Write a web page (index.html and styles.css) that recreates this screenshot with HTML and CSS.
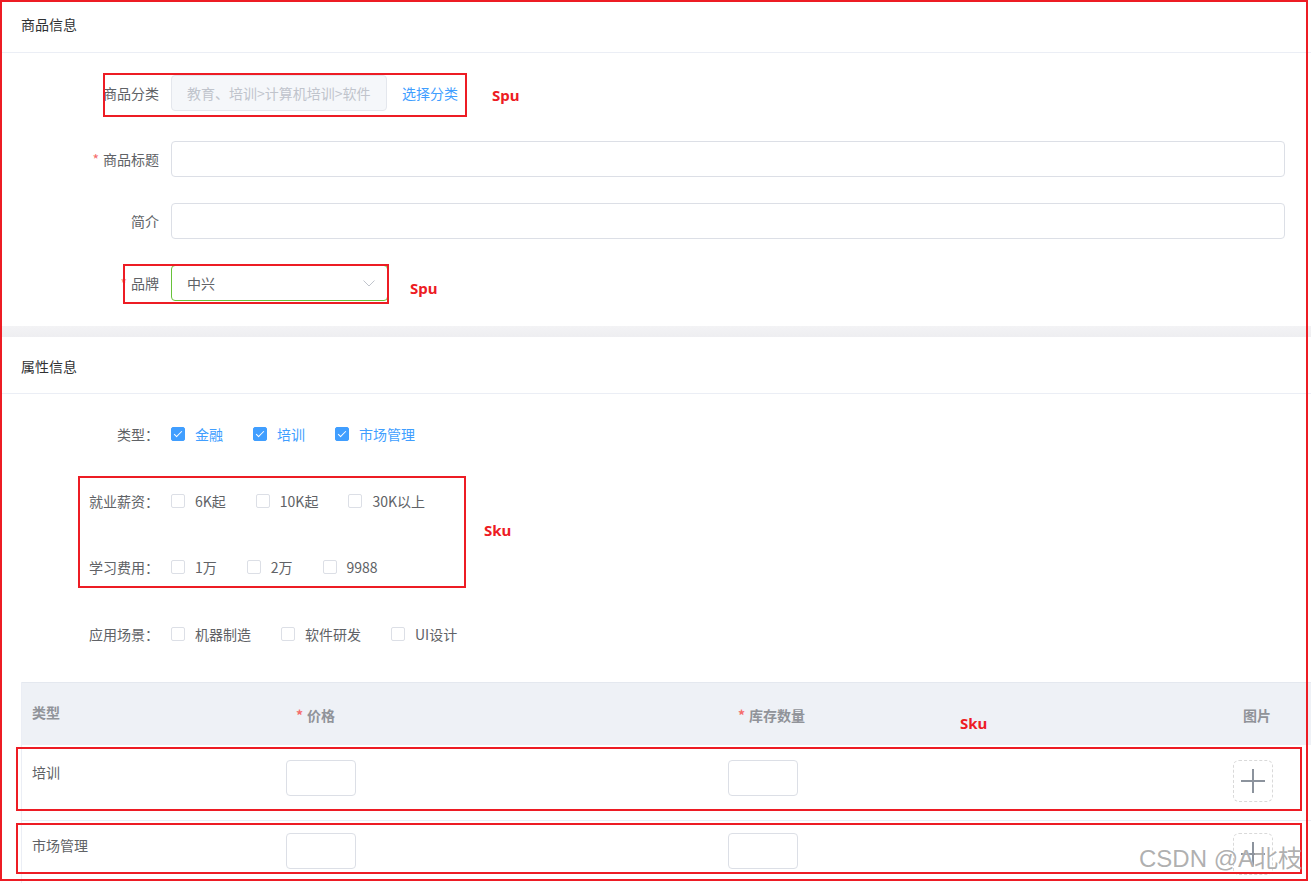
FILE: index.html
```html
<!DOCTYPE html>
<html lang="zh-CN">
<head>
<meta charset="utf-8">
<title>商品信息</title>
<link rel="stylesheet" href="styles.css">
</head>
<body>
<div class="page">
  <section class="card">
    <div class="card-header first">商品信息</div>
    <div class="card-body form">
      <div class="form-item item-1">
        <div class="form-label">商品分类</div>
        <div class="form-content">
          <div class="input disabled">教育、培训&gt;计算机培训&gt;软件</div>
          <a class="link">选择分类</a>
        </div>
      </div>
      <div class="form-item">
        <div class="form-label"><span class="req">*</span>商品标题</div>
        <div class="form-content grow"><div class="input full"></div></div>
      </div>
      <div class="form-item">
        <div class="form-label">简介</div>
        <div class="form-content grow"><div class="input full"></div></div>
      </div>
      <div class="form-item">
        <div class="form-label"><span class="req">*</span>品牌</div>
        <div class="form-content">
          <div class="input select">
            <span>中兴</span>
            <svg class="chevron" width="12" height="7" viewBox="0 0 12 7"><path d="M0.5 0.5 L6 6 L11.5 0.5" fill="none" stroke="#c0c4cc" stroke-width="1"/></svg>
          </div>
        </div>
      </div>
    </div>
  </section>

  <div class="band"></div>

  <section class="card">
    <div class="card-header second">属性信息</div>
    <div class="card-body attrs">
      <div class="check-row">
        <div class="form-label">类型：</div>
        <label class="check checked"><span class="box"></span><span class="txt">金融</span></label>
        <label class="check checked"><span class="box"></span><span class="txt">培训</span></label>
        <label class="check checked"><span class="box"></span><span class="txt">市场管理</span></label>
      </div>
      <div class="check-row">
        <div class="form-label">就业薪资：</div>
        <label class="check"><span class="box"></span><span class="txt">6K起</span></label>
        <label class="check"><span class="box"></span><span class="txt">10K起</span></label>
        <label class="check"><span class="box"></span><span class="txt">30K以上</span></label>
      </div>
      <div class="check-row">
        <div class="form-label">学习费用：</div>
        <label class="check"><span class="box"></span><span class="txt">1万</span></label>
        <label class="check"><span class="box"></span><span class="txt">2万</span></label>
        <label class="check"><span class="box"></span><span class="txt">9988</span></label>
      </div>
      <div class="check-row last">
        <div class="form-label">应用场景：</div>
        <label class="check"><span class="box"></span><span class="txt">机器制造</span></label>
        <label class="check"><span class="box"></span><span class="txt">软件研发</span></label>
        <label class="check"><span class="box"></span><span class="txt">UI设计</span></label>
      </div>

      <div class="table">
        <div class="tr thead">
          <div class="th th-first">类型</div>
          <div class="th"><span class="req">*</span>价格</div>
          <div class="th"><span class="req">*</span>库存数量</div>
          <div class="th">图片</div>
        </div>
        <div class="tr tbody row-1">
          <div class="td td-text">培训</div>
          <div class="td"><div class="input small"></div></div>
          <div class="td"><div class="input small"></div></div>
          <div class="td"><div class="upload"><span class="plus"></span></div></div>
        </div>
        <div class="tr tbody row-2">
          <div class="td td-text">市场管理</div>
          <div class="td"><div class="input small"></div></div>
          <div class="td"><div class="input small"></div></div>
          <div class="td"><div class="upload"><span class="plus"></span></div></div>
        </div>
      </div>
    </div>
  </section>

  <div class="annotations">
    <span class="anno frame"></span>
    <span class="anno box-cat"></span>
    <span class="anno-text spu-1">Spu</span>
    <span class="anno box-brand"></span>
    <span class="anno-text spu-2">Spu</span>
    <span class="anno box-sku"></span>
    <span class="anno-text sku-1">Sku</span>
    <span class="anno-text sku-2">Sku</span>
    <span class="anno box-row1"></span>
    <span class="anno box-row2"></span>
    <span class="watermark">CSDN @A北枝</span>
  </div>
</div>
</body>
</html>
```

FILE: styles.css
```css
* { box-sizing: border-box; }

html, body {
  margin: 0;
  padding: 0;
  overflow: hidden;
  background: #fff;
}

body {
  font-family: "Noto Sans CJK SC", "Microsoft YaHei", "Noto Sans", sans-serif;
  font-size: 14px;
  line-height: 20px;
  color: #606266;
}

.page {
  position: relative;
  width: 1311px;
  height: 883px;
  overflow: hidden;
}

.card { background: #fff; }

.card-header {
  display: flex;
  align-items: center;
  padding-left: 21px;
  color: #303133;
  border-bottom: 1px solid #ebeef5;
}
.card-header.first { height: 53px; padding-bottom: 4px; }
.card-header.second { height: 57px; padding-top: 2px; }

.form { padding: 22px 26px 25px 0; }

.form-item {
  display: flex;
  align-items: center;
  height: 36px;
  margin-bottom: 26px;
}
.form-item.item-1 { margin-bottom: 30px; }
.form-item:last-child { margin-bottom: 0; }

.form-label {
  flex: 0 0 171px;
  width: 171px;
  padding-right: 12px;
  text-align: right;
  color: #606266;
  white-space: nowrap;
}

.req {
  color: #f56c6c;
  margin-right: 4px;
}

.form-content {
  display: flex;
  align-items: center;
  height: 100%;
}
.form-content.grow { flex: 1; }

.input {
  height: 36px;
  border: 1px solid #dcdfe6;
  border-radius: 4px;
  background: #fff;
}
.input.full { width: 100%; }
.input.disabled {
  display: flex;
  align-items: center;
  width: 216px;
  padding: 0 15px;
  background: #f5f7fa;
  border-color: #e4e7ed;
  color: #c0c4cc;
  white-space: nowrap;
}
.link {
  margin-left: 15px;
  color: #409eff;
  cursor: pointer;
}

.input.select {
  display: flex;
  align-items: center;
  justify-content: space-between;
  width: 217px;
  padding: 0 12px 0 15px;
  border-color: #67c23a;
  color: #606266;
}
.chevron { display: block; }

.band {
  height: 11px;
  background: linear-gradient(#f3f3f5, #eeeef1);
}

.attrs { padding: 30px 0 0 21px; }
.attrs .form-label { flex-basis: 150px; width: 150px; padding-right: 12px; }

.check-row {
  display: flex;
  align-items: center;
  height: 20px;
  margin-bottom: 46.7px;
}
.check-row.last { margin-bottom: 38px; }

.check {
  display: flex;
  align-items: center;
  margin-right: 30px;
  color: #606266;
}
.check .box {
  position: relative;
  width: 14px;
  height: 14px;
  border: 1px solid #dcdfe6;
  border-radius: 2px;
  background: #fff;
  margin-right: 10px;
}
.check.checked .box {
  background: #409eff;
  border-color: #409eff;
}
.check.checked .box::after {
  content: "";
  position: absolute;
  left: 4px;
  top: 1px;
  width: 3px;
  height: 7px;
  border-right: 1px solid #fff;
  border-bottom: 1px solid #fff;
  transform: rotate(45deg);
}
.check.checked .txt { color: #409eff; }

.table {
  border-left: 1px solid #ebeef5;
}
.tr {
  display: grid;
  grid-template-columns: 264px 442px 505px 1fr;
}
.thead {
  height: 63px;
  background: #eef1f6;
  border-top: 1px solid #e4e8ef;
}
.th {
  display: flex;
  align-items: center;
  padding: 2px 0 0 10px;
  font-weight: bold;
  color: #909399;
}
.th.th-first { padding: 0 0 4px 10px; }

.tbody {
  height: 76px;
  border-bottom: 1px solid #ebeef5;
}
.row-1 .td { padding-top: 15px; }
.row-1 .td-text { padding-top: 17px; }
.row-2 .td { padding-top: 12px; }
.row-2 .td-text { padding-top: 14px; }
.td-text {
  padding-left: 10px;
  color: #606266;
}
.input.small { width: 70px; }

.upload {
  position: relative;
  width: 40px;
  height: 42px;
  border: 1px dashed #d9d9d9;
  border-radius: 6px;
}
.plus::before,
.plus::after {
  content: "";
  position: absolute;
  background: #8c939d;
}
.plus::before { left: 7px; right: 7px; top: 19px; height: 2px; }
.plus::after { top: 8px; bottom: 8px; left: 18px; width: 2px; }

/* annotation overlay */
.annotations {
  position: absolute;
  inset: 0;
  pointer-events: none;
}
.anno {
  position: absolute;
  border: 2px solid #ed1c24;
}
.frame { left: 0; top: 0; width: 1308px; height: 881px; }
.box-cat { left: 103px; top: 73px; width: 364px; height: 44px; }
.box-brand { left: 123px; top: 264px; width: 266px; height: 40px; }
.box-sku { left: 78px; top: 476px; width: 388px; height: 112px; }
.box-row1 { left: 16px; top: 747px; width: 1286px; height: 64px; }
.box-row2 { left: 16px; top: 823px; width: 1286px; height: 51px; }

.anno-text {
  position: absolute;
  font-family: "Noto Sans", "Liberation Sans", sans-serif;
  font-weight: bold;
  font-size: 15px;
  line-height: 20px;
  color: #ed1c24;
}
.spu-1 { left: 492px; top: 85px; }
.spu-2 { left: 410px; top: 278px; }
.sku-1 { left: 484px; top: 520px; }
.sku-2 { left: 960px; top: 713px; }

.watermark {
  position: absolute;
  left: 1139px;
  top: 845px;
  font-family: "Liberation Sans", "Noto Sans CJK SC", sans-serif;
  font-size: 24px;
  line-height: 28px;
  color: rgba(150, 150, 150, 0.75);
  text-shadow: 0 0 1px #fff;
  white-space: nowrap;
}
```
